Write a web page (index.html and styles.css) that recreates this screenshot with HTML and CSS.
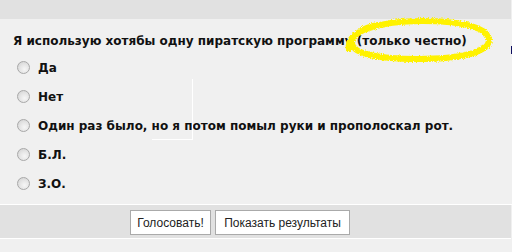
FILE: index.html
```html
<!DOCTYPE html>
<html lang="ru">
<head>
<meta charset="utf-8">
<link rel="stylesheet" href="styles.css">
</head>
<body>
<div class="page">
  <div class="topbar"></div>
  <div class="main">
    <div class="question">Я использую хотябы одну пиратскую программу (только честно)</div>
    <div class="options">
      <label class="opt"><input type="radio" name="v"><span>Да</span></label>
      <label class="opt"><input type="radio" name="v"><span>Нет</span></label>
      <label class="opt"><input type="radio" name="v"><span>Один раз было, но я потом помыл руки и прополоскал рот.</span></label>
      <label class="opt"><input type="radio" name="v"><span>Б.Л.</span></label>
      <label class="opt"><input type="radio" name="v"><span>З.О.</span></label>
    </div>
    <div class="artifact"></div>
    <svg class="highlight" width="170" height="75" viewBox="0 0 170 75">
      <defs>
        <filter id="rough" x="-10%" y="-20%" width="120%" height="140%">
          <feTurbulence type="fractalNoise" baseFrequency="0.9" numOctaves="2" seed="3" result="n"/>
          <feDisplacementMap in="SourceGraphic" in2="n" scale="4" xChannelSelector="R" yChannelSelector="G"/>
        </filter>
      </defs>
      <path filter="url(#rough)" d="M13 54 C 9 36, 45 26, 86 26 C 130 26, 153 34, 153 45 C 153 57, 125 64, 82 64 C 40 64, 16 58, 16 48 C 16 40, 26 33, 42 30" fill="none" stroke="#fff200" stroke-width="6" stroke-linecap="round"/>
    </svg>
    <div class="mark"></div>
  </div>
  <div class="bottombar">
    <button class="btn vote">Голосовать!</button>
    <button class="btn results">Показать результаты</button>
  </div>
  <div class="footer"></div>
</div>
</body>
</html>
```
FILE: styles.css
```css
html, body {
  margin: 0;
  padding: 0;
  background: #f0f0f0;
}
.page {
  width: 512px;
  height: 252px;
  position: relative;
  font-family: "DejaVu Sans", Verdana, sans-serif;
  overflow: hidden;
}
.topbar {
  height: 19px;
  width: 511px;
  background: #e1e1e1;
}
.main {
  position: relative;
  height: 186px;
  padding-top: 14px;
  box-sizing: border-box;
  border-bottom: 1px solid #ffffff;
}
.question {
  padding-left: 13px;
  font-size: 12px;
  font-weight: bold;
  line-height: 16px;
  color: #111;
  white-space: nowrap;
}
.options {
  margin-top: 4px;
  display: flex;
  flex-direction: column;
}
.opt {
  height: 29px;
  display: flex;
  align-items: center;
  padding-left: 17px;
  font-size: 12px;
  font-weight: bold;
  color: #111;
  white-space: nowrap;
}
.opt input {
  appearance: none;
  -webkit-appearance: none;
  width: 13px;
  height: 13px;
  margin: 0 8px 0 0;
  border: 1px solid #a8a8a8;
  border-radius: 50%;
  box-sizing: border-box;
  background: radial-gradient(circle at 60% 65%, #f6f6f6 0%, #e6e6e6 45%, #cfcfcf 100%);
  flex: none;
}
.artifact {
  position: absolute;
  left: 152px;
  top: 60px;
  width: 40px;
  height: 60px;
  border-right: 1px solid #ffffff;
  border-bottom: 1px solid #ffffff;
}
.highlight {
  position: absolute;
  left: 336px;
  top: -24px;
}
.mark {
  position: absolute;
  left: 511px;
  top: 27px;
  width: 1px;
  height: 8px;
  background: #101060;
}
.bottombar {
  height: 34px;
  width: 511px;
  background: #e1e1e1;
  border-bottom: 1px solid #ffffff;
  display: flex;
  align-items: flex-start;
  padding: 5px 0 0 130px;
  box-sizing: border-box;
  gap: 4px;
}
.btn {
  height: 25px;
  margin: 0;
  padding: 0;
  background: #ffffff;
  border: 1px solid #aaaaaa;
  border-radius: 0;
  font-family: "Liberation Sans", Arial, sans-serif;
  font-size: 12px;
  color: #222;
  text-align: center;
}
.vote {
  width: 81px;
}
.results {
  width: 135px;
}
```
